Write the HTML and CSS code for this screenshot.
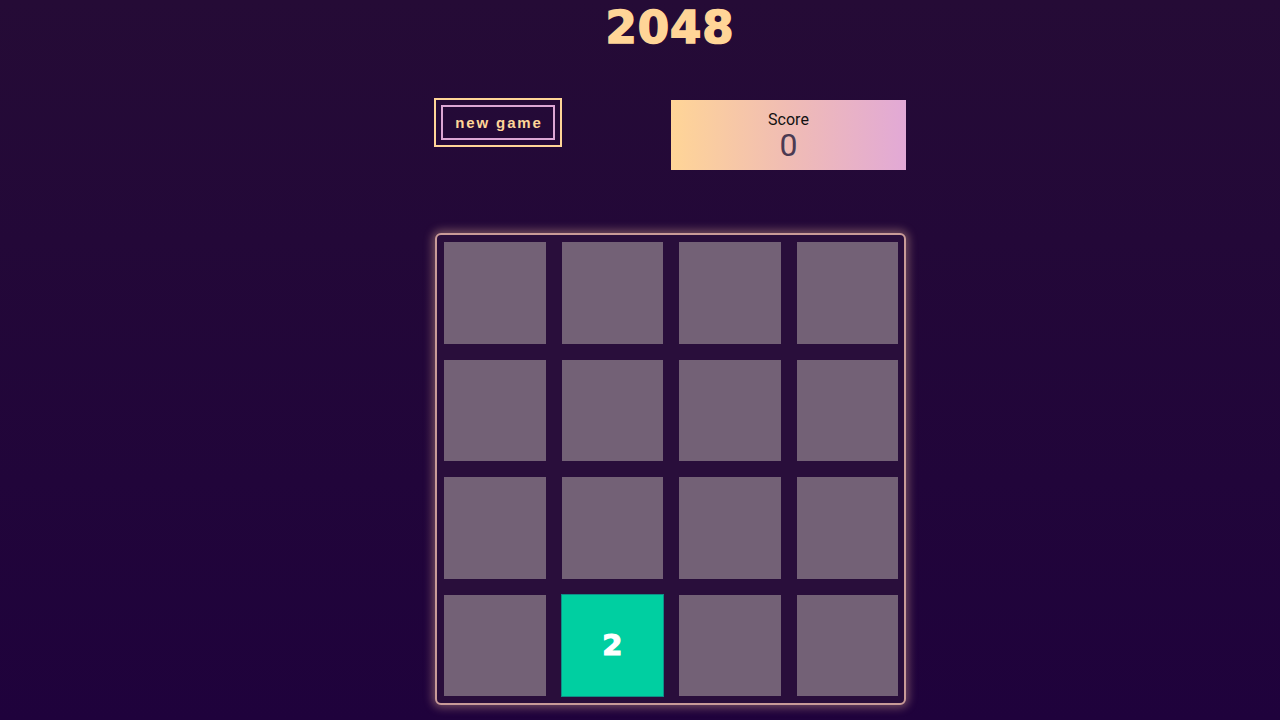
FILE: index.html
```html
<!DOCTYPE html>
<html>
<head>
<meta charset="utf-8">
<link rel="stylesheet" href="styles.css">
</head>
<body>
<div class="game">
  <h1 class="title">2048</h1>
  <div class="top">
    <button class="new-game"><span class="new-game-inner">new game</span></button>
    <div class="score">
      <div class="score-label">Score</div>
      <div class="score-value">0</div>
    </div>
  </div>
  <div class="board">
    <div class="cell"></div><div class="cell"></div><div class="cell"></div><div class="cell"></div>
    <div class="cell"></div><div class="cell"></div><div class="cell"></div><div class="cell"></div>
    <div class="cell"></div><div class="cell"></div><div class="cell"></div><div class="cell"></div>
    <div class="cell"></div><div class="cell tile-2">2</div><div class="cell"></div><div class="cell"></div>
  </div>
</div>
</body>
</html>
```
FILE: styles.css
```css
html, body {
  margin: 0;
  height: 100%;
}
body {
  background: linear-gradient(180deg, #250b36 0%, #1f023c 100%);
  font-family: "Liberation Sans", Arial, sans-serif;
  overflow: hidden;
}
.game {
  width: 472px;
  margin-left: 434px;
  display: flex;
  flex-direction: column;
}
.title {
  margin: 0;
  padding-top: 3px;
  height: 50px;
  text-align: center;
  font-family: "DejaVu Sans", sans-serif;
  font-weight: 700;
  font-size: 45px;
  line-height: 50px;
  color: #ffd597;
  letter-spacing: 1px;
  -webkit-text-stroke: 1.6px #ffd597;
}
.top {
  display: flex;
  justify-content: space-between;
  align-items: flex-start;
  margin-top: 45px;
  height: 72px;
}
.new-game {
  margin: 0;
  padding: 5px;
  background: transparent;
  border: 2px solid #ffd597;
  width: 128px;
  height: 49px;
  box-sizing: border-box;
  cursor: pointer;
  display: flex;
}
.new-game-inner {
  flex: 1;
  border: 2px solid #dca6d4;
  display: flex;
  align-items: center;
  justify-content: center;
  color: #ffd597;
  font-family: "Liberation Sans", Arial, sans-serif;
  font-weight: 700;
  font-size: 15px;
  letter-spacing: 1.9px;
  padding-left: 2px;
}
.score {
  margin-top: 2px;
  width: 235px;
  height: 70px;
  background: linear-gradient(90deg, #ffd597 0%, #f0bcb4 50%, #e2a9d6 100%);
  display: flex;
  flex-direction: column;
  align-items: center;
  padding-top: 11px;
  box-sizing: border-box;
}
.score-label {
  font-family: Roboto, "Liberation Sans", sans-serif;
  font-size: 16px;
  line-height: 18px;
  color: #111;
}
.score-value {
  font-family: Roboto, "Liberation Sans", sans-serif;
  font-size: 32px;
  line-height: 32px;
  margin-top: 0px;
  color: #4b3a52;
}
.board {
  margin-top: 63px;
  margin-left: 1px;
  width: 471px;
  height: 472px;
  box-sizing: border-box;
  border: 2px solid #c99b98;
  border-radius: 6px;
  background: #290e3b;
  box-shadow: 0 0 8px 3px rgba(255, 200, 160, 0.35);
  padding: 7px 6px 7px 7px;
  display: grid;
  grid-template-columns: repeat(4, 1fr);
  grid-template-rows: repeat(4, 1fr);
  column-gap: 16px;
  row-gap: 16px;
}
.cell {
  background: #736176;
  display: flex;
  align-items: center;
  justify-content: center;
}
.tile-2 {
  background: #00cfa1;
  border: 1px solid #0e8e87;
  margin: -1px;
  color: #fff;
  font-family: "DejaVu Sans", sans-serif;
  font-weight: 700;
  font-size: 29px;
  -webkit-text-stroke: 1.2px #fff;
}
```
